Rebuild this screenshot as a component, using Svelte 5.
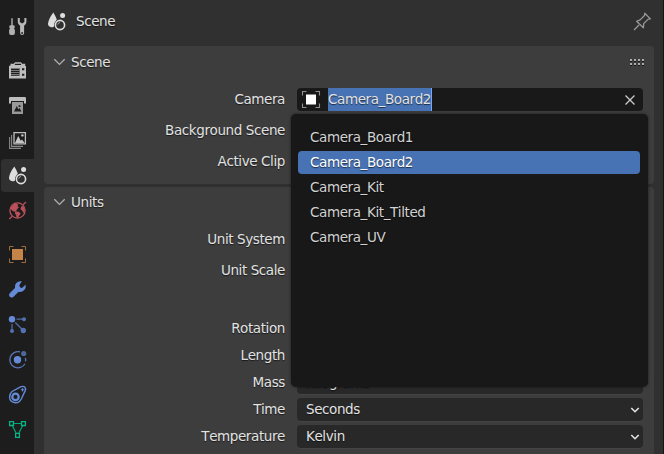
<script>
  const options = ['Camera_Board1', 'Camera_Board2', 'Camera_Kit', 'Camera_Kit_Tilted', 'Camera_UV'];
  const groups = [
    ['tool'],
    ['render', 'output', 'layers', 'scene', 'world'],
    ['object', 'modifier', 'particles', 'physics', 'constraint', 'mesh']
  ];
  const selected = 'Camera_Board2';
</script>

{#snippet icon(name)}
  <svg class="icon" width="21" height="21" viewBox="0 0 21 21" fill="none">
    {#if name === 'tool'}
      <path d="M4.300 2.200h1.400v7H4.300zM2.300 10.400q0-1.200 1.200-1.200h3q1.200 0 1.200 1.200v1.400l-.7.8.9 1.400v3q0 2-1.800 2H4q-1.900 0-1.900-2v-3l.9-1.400-.7-.8z" fill="#b0b0b0" />
      <path fill-rule="evenodd" d="M10.800 2v4q0 2.200 2.300 3.800V17q0 2 2 2t2-2V9.800Q19.400 8.200 19.400 6V2h-2v4L15.100 7.600 12.800 6V2zM15.100 16.100a.9.9 0 1 1 0 1.800.9.9 0 0 1 0-1.800z" fill="#b8b8b8" />
    {:else if name === 'render'}
      <path fill-rule="evenodd" d="M3.500 3.800h3.300l1.200-1.600h6l1.200 1.600h3V6H19v12.500H2V5.800h1.500zM7.600 4.900h6.500V3.800H8.200zM4 8.200v7.500h8.500V8.200zM15 8.200v2h2.300v-2zM15 13.800v2h2.300v-2z" fill="#bdbdbd" />
      <path d="M4 8.500h8.500M4 10.500h8.500M4 12.500h8.500M4 14.500h8.500" stroke="#777" stroke-width="1" />
    {:else if name === 'output'}
      <path d="M2 8.500V3.300q0-1.300 1.300-1.300h14.400Q19 2 19 3.300v5.200h-2V6H4v2.500z" fill="#bdbdbd" />
      <path fill-rule="evenodd" d="M5 7h11v12H5zM7 16.500h7.500L12.500 13l-1.200 1.200L9.800 11zM11.600 10.300h1.800v1.800h-1.800z" fill="#999" />
    {:else if name === 'layers'}
      <path d="M2.600 7v11.400H14M4.600 5v11.400H16" stroke="#888" stroke-width="1.100" />
      <path d="M7 2.600h11.400v11.200H7z" stroke="#bdbdbd" stroke-width="1.300" />
      <path d="M8 13l3.200-7 2.600 4.800 1.200-1.300L17.600 13z" fill="#c6c6c6" /><circle cx="15.400" cy="5.400" r="1.200" fill="#c6c6c6" />
    {:else if name === 'scene'}
      <path d="M7.300 1.600q2.500 4 3.500 6.900-2.900 2.800-2.800 6.900-1 .9-2.700.9Q2 15.700 2 12.800 2.600 8 7.300 1.600z" fill="#dedede" />
      <circle cx="16.600" cy="4.400" r="2.500" fill="#dedede" />
      <circle cx="14" cy="14" r="4.600" stroke="#dedede" stroke-width="1.600" />
      <path d="M11.700 13.600q.4-1.900 2.200-2.100" stroke="#aaa" stroke-width="1" />
    {:else if name === 'world'}
      <circle cx="10.500" cy="10.500" r="7.600" stroke="#b9505b" stroke-width="1.300" />
      <path d="M2.300 19l2.900-2.700M16.100 4.800l2.900-2.800" stroke="#b9505b" stroke-width="1.300" />
      <path d="M3.500 8.500Q5 4 9 3.400l2.200.9-.7 1.700 1.400 1.300L9.700 9.800l-.5 1.800-2.700-.2-1.900-1.500zM8.500 11.500l3.200.2 2.100 1.700-1.700 2.300-1 2.600-1.700-.7-.3-2.700-1.300-1.600zM14 6.700l1.900-1 1.700 2.800.2 3-1.600 1.500-.8-2.200-1.800-1.200z" fill="#b9505b" />
    {:else if name === 'object'}
      <path d="M2.500 6.500v-4h4M14.500 2.500h4v4M18.500 14.500v4h-4M6.500 18.500h-4v-4" stroke="#a16c3f" stroke-width="1" />
      <path d="M5 5h11v11H5z" fill="#c58549" />
    {:else if name === 'modifier'}
      <path d="M14.900 2.300Q11.500 1.600 9.300 3.900 7.200 6.200 8 9L2.700 14.200q-1.500 1.900 0 3.600 1.800 1.500 3.600.1l5.300-5.200q3 .8 5.500-1.500 2.300-2.400 1.500-5.800l-2.900 3.100q-1.300 1-2.600-.3t-.4-2.600z" fill="#658bd8" />
    {:else if name === 'particles'}
      <circle cx="5" cy="5.200" r="3.200" fill="#658bd8" />
      <path d="M9.500 5.200h7M5 10v6M8.300 8.500l7 7" stroke="#4f6ba5" stroke-width="1.300" />
      <circle cx="17" cy="5.200" r="2" fill="#5271b1" /><circle cx="5" cy="17" r="2" fill="#5271b1" /><circle cx="16.300" cy="16.500" r="2.700" fill="#5271b1" />
    {:else if name === 'physics'}
      <path d="M13 2.900a8.100 8.100 0 1 0 5 11.800M18.400 8.800q.5 2 .1 3.500" stroke="#5976b4" stroke-width="1.300" />
      <circle cx="10.500" cy="10.800" r="3.700" fill="#658bd8" /><circle cx="16.700" cy="4.500" r="2.600" fill="#4d669c" />
    {:else if name === 'constraint'}
      <path d="M5 7.500L13.500 2.900q2.700-1.200 4.200.2 1.400 1.500.4 3.800L14.300 15q-2.100 4-6 3.800-5.500-.7-5.700-5.500.1-3.800 2.400-5.800z" stroke="#658bd8" stroke-width="1.400" />
      <circle cx="8.500" cy="12.900" r="3.200" stroke="#658bd8" stroke-width="2.200" /><path d="M15.500 4.200v3.200M13.900 5.800h3.200" stroke="#658bd8" stroke-width="1.100" />
    {:else if name === 'mesh'}
      <path d="M6.500 4.500h8M5.500 7l3.600 7M15.500 7l-3.600 7" stroke="#05a57a" stroke-width="1.200" />
      <path d="M2.600 2.600h3.900v3.900H2.600zM14.500 2.600h3.900v3.900h-3.900zM8.600 14.400h3.800v3.900H8.600z" stroke="#05b586" stroke-width="1.300" />
    {:else if name === 'camera'}
      <path d="M2.500 6.500v-4h4M15.500 2.500h4v4M19.500 14.500v4h-4M6.500 18.500h-4v-4" stroke="#929292" stroke-width="1.100" />
      <path d="M6 5.500h10v10H6z" fill="#fff" />
    {:else if name === 'pin'}
      <path d="M2 19l5-5M4.600 10.300l6.800 6.500.3-4.200 4.500-4.500 2.200-.2-5.600-5.700-.3 2.300-4.400 4.400z" stroke="#999" stroke-width="1.300" stroke-linejoin="round" />
    {/if}
  </svg>
{/snippet}

{#snippet chevron()}
  <svg class="fold" width="13" height="8" viewBox="0 0 13 8" fill="none"><path d="M1.300 1.200l5.200 5.200 5.200-5.200" stroke="#b0b0b0" stroke-width="1.300" /></svg>
{/snippet}

{#snippet select(label, value)}
  <div class="row close">
    <span class="label">{label}</span>
    <div class="select"><span>{value}</span>
      <svg width="10" height="8" viewBox="0 0 10 8" fill="none"><path d="M1.300 2l3.700 3.700L8.700 2" stroke="#e3e3e3" stroke-width="1.600" /></svg>
    </div>
  </div>
{/snippet}

<div class="window">
  <nav>
    {#each groups as group}
      <div class="group">
        {#each group as name}
          <div class="tab" class:active={name === 'scene'}>{@render icon(name)}</div>
        {/each}
      </div>
    {/each}
  </nav>
  <main>
    <header>{@render icon('scene')}<span class="title">Scene</span>{@render icon('pin')}</header>
    <section class="scene">
      <div class="heading">{@render chevron()}<span>Scene</span>
        <svg class="grip" width="15" height="7" viewBox="0 0 15 7">
          {#each [0, 4, 8, 12] as x}{#each [0, 4] as y}
            <rect {x} {y} width="2" height="2" fill="#aaa" /><rect {x} y={y + 2} width="2" height="1" fill="#171717" />
          {/each}{/each}
        </svg>
      </div>
      <div class="row">
        <span class="label">Camera</span>
        <div class="search">
          {@render icon('camera')}<span class="selection">Camera_Board2</span>
          <svg class="clear" width="12" height="12" viewBox="0 0 12 12"><path d="M1.500 1.500l9 9M10.500 1.500l-9 9" stroke="#ccc" stroke-width="1.300" /></svg>
          <div class="menu">
            {#each options as option}
              <div class="option" class:chosen={option === selected}>{option}</div>
            {/each}
          </div>
        </div>
      </div>
      <div class="row"><span class="label">Background Scene</span></div>
      <div class="row"><span class="label">Active Clip</span></div>
    </section>
    <section class="units">
      <div class="heading">{@render chevron()}<span>Units</span></div>
      <div class="row"><span class="label">Unit System</span></div>
      <div class="row"><span class="label">Unit Scale</span></div>
      <div class="spacer"></div>
      {@render select('Rotation', 'Degrees')}
      {@render select('Length', 'Meters')}
      {@render select('Mass', 'Kilograms')}
      {@render select('Time', 'Seconds')}
      {@render select('Temperature', 'Kelvin')}
    </section>
  </main>
  <div class="edge"></div>
</div>

<style>
  :global(body) { overflow: hidden; background: #303030; }
  .window { display: flex; box-sizing: border-box; width: 664px; height: 454px; overflow: hidden; background: #303030; color: #e2e2e2; font: 13.5px/23px "DejaVu Sans", sans-serif; font-kerning: none; letter-spacing: -.4px; text-shadow: 0 1px 1px #0009; }
  svg { display: block; flex: none; }
  nav { box-sizing: border-box; width: 34px; padding: 10px 0 0 1px; background: #1d1d1d; display: flex; flex-direction: column; gap: 11px; flex: none; }
  .group { display: flex; flex-direction: column; gap: 2px; }
  .tab { box-sizing: border-box; height: 33px; padding: 6px; border-radius: 4px 0 0 4px; }
  .tab.active { background: #303030; }
  main { flex: 1; min-width: 0; padding: 0 9px 0 10px; }
  header { height: 46px; display: flex; align-items: center; box-sizing: border-box; padding: 0 0 4px 2px; }
  .title { flex: 1; padding-left: 9px; }
  header > :global(svg:last-child) { margin-right: 1px; }
  section { background: #3d3d3d; border-radius: 4px; }
  .scene { height: 138px; margin-bottom: 3px; }
  .units { height: 290px; }
  .heading { display: flex; align-items: center; height: 32px; padding: 0 9px; }
  .heading span { padding-left: 5px; flex: 1; }
  .row { display: flex; height: 23px; margin-bottom: 8px; }
  .scene .heading { margin-bottom: 10px; }
  .units .heading { height: 30px; margin-bottom: 11px; }
  .label { width: 241px; text-align: right; flex: none; margin-right: 12px; }
  .spacer { height: 27px; }
  .close { margin-bottom: 4px; }
  .select { width: 346px; box-sizing: border-box; padding: 0 3px 0 9px; background: #282828; border-radius: 4px; display: flex; align-items: center; justify-content: space-between; box-shadow: 0 1px #444; }
  .search { position: relative; box-sizing: border-box; width: 346px; padding: 0 7px 0 3px; display: flex; align-items: center; background: #191919; border-radius: 4px; }
  .selection { margin-left: 7px; width: 103px; height: 23px; background: #4772b3; border-right: 1px solid #71a8ff; white-space: nowrap; }
  .clear { margin-left: auto; }
  .menu { position: absolute; z-index: 2; left: -6px; top: 26px; width: 357px; height: 273px; box-sizing: border-box; padding: 12px 8px 0 7px; background: #181818; border-radius: 5px; box-shadow: 0 0 3px #0008; }
  .option { box-sizing: border-box; height: 23px; margin-bottom: 2px; padding-left: 12px; border-radius: 4px; color: #d2d2d2; }
  .chosen { background: #4772b3; color: #fff; }
  .edge { width: 1px; background: #151515; flex: none; }
</style>
